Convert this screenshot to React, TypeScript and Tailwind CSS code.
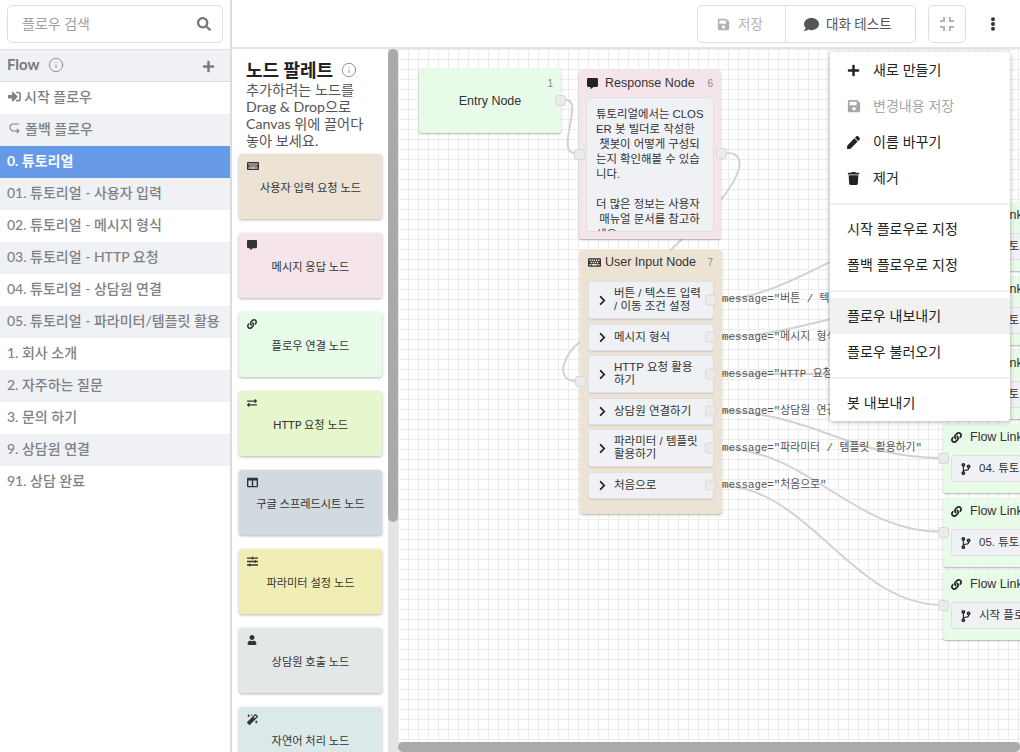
import React from 'react'
import {
  FaSearch, FaPlus, FaSave, FaComment, FaCommentAlt, FaEllipsisV, FaPen, FaTrash, FaLink, FaCodeBranch,
  FaChevronRight, FaKeyboard, FaSignInAlt, FaUser, FaMagic, FaSlidersH, FaExchangeAlt, FaColumns,
} from 'react-icons/fa'
import { MdFullscreenExit } from 'react-icons/md'
import { Info } from 'lucide-react'

const flows = [
  '01. 튜토리얼 - 사용자 입력',
  '02. 튜토리얼 - 메시지 형식',
  '03. 튜토리얼 - HTTP 요청',
  '04. 튜토리얼 - 상담원 연결',
  '05. 튜토리얼 - 파라미터/템플릿 활용',
  '1. 회사 소개',
  '2. 자주하는 질문',
  '3. 문의 하기',
  '9. 상담원 연결',
  '91. 상담 완료',
]

const palette = [
  { name: '사용자 입력 요청 노드', bg: 'bg-[#ece3d5]', icon: <FaKeyboard size={12} /> },
  { name: '메시지 응답 노드', bg: 'bg-[#f5e5ea]', icon: <FaCommentAlt size={10} /> },
  { name: '플로우 연결 노드', bg: 'bg-[#e8fae8]', icon: <FaLink size={10} /> },
  { name: 'HTTP 요청 노드', bg: 'bg-[#e6f7cd]', icon: <FaExchangeAlt size={10} /> },
  { name: '구글 스프레드시트 노드', bg: 'bg-[#d0dae0]', icon: <FaColumns size={11} /> },
  { name: '파라미터 설정 노드', bg: 'bg-[#f0eeb5]', icon: <FaSlidersH size={11} /> },
  { name: '상담원 호출 노드', bg: 'bg-[#e4e7e7]', icon: <FaUser size={10} /> },
  { name: '자연어 처리 노드', bg: 'bg-[#dbe9e9]', icon: <FaMagic size={11} /> },
]

const inputs = [
  { label: '버튼 / 텍스트 입력\n/ 이동 조건 설정', h: 'h-[38px]' },
  { label: '메시지 형식', h: 'h-[27px]' },
  { label: 'HTTP 요청 활용\n하기', h: 'h-[38px]' },
  { label: '상담원 연결하기', h: 'h-[27px]' },
  { label: '파라미터 / 템플릿\n활용하기', h: 'h-[38px]' },
  { label: '처음으로', h: 'h-[27px]' },
]

const messages = [
  { text: 'message="버튼 / 텍스트 입력 / 이동 조건 설정"', top: 'top-[244px]' },
  { text: 'message="메시지 형식"', top: 'top-[282px]' },
  { text: 'message="HTTP 요청 활용하기"', top: 'top-[319px]' },
  { text: 'message="상담원 연결하기"', top: 'top-[356px]' },
  { text: 'message="파라미터 / 템플릿 활용하기"', top: 'top-[393px]' },
  { text: 'message="처음으로"', top: 'top-[430px]' },
]

const links = [
  { label: '01. 튜토리얼', top: 'top-[153px]' },
  { label: '02. 튜토리얼', top: 'top-[227px]' },
  { label: '03. 튜토리얼', top: 'top-[301px]' },
  { label: '04. 튜토리얼', top: 'top-[375px]' },
  { label: '05. 튜토리얼', top: 'top-[449px]' },
  { label: '시작 플로우', top: 'top-[522px]' },
]

function Port({ className }: { className: string }) {
  return <div className={`absolute w-[11px] h-[11px] rounded-[3px] bg-[#ebebeb] border border-[#d8d8d8] ${className}`} />
}

function MenuItem({ icon, label, muted }: { icon: React.ReactNode; label: string; muted?: boolean }) {
  return (
    <div className={`flex items-center h-[36px] pl-[17px] text-[14px] ${muted ? 'text-[#a8a8a8]' : 'text-[#222]'}`}>
      <span className="w-[26px] flex">{icon}</span>
      {label}
    </div>
  )
}

function Divider() {
  return <div className="border-t-2 border-[#f0f0f0]" />
}

export default function App() {
  return (
    <div className="flex w-[1020px] h-[752px] overflow-hidden bg-white font-['Lato','Noto_Sans_CJK_KR',sans-serif]">
      {/* flow list */}
      <aside className="w-[232px] shrink-0 border-r-2 border-[#dcdcdc] flex flex-col">
        <div className="h-[49px] px-[7px] pt-[5px]">
          <div className="flex items-center justify-between h-[38px] border border-[#dedede] rounded-[5px] pl-[14px] pr-[11px] pb-[1px] text-[14px] text-[#a0a0a0]">
            플로우 검색
            <FaSearch size={14} className="text-[#777]" />
          </div>
        </div>
        <div className="flex items-center justify-between h-[33px] pb-[2px] px-[7px] bg-[#eff1f5] border-y border-[#dedede] text-[#777b80]">
          <span className="flex items-center gap-[8px] font-bold text-[15px]">
            Flow <Info size={16} strokeWidth={1.2} />
          </span>
          <FaPlus size={13} className="mr-[8px] mt-[3px]" />
        </div>
        <div className="text-[14px] font-medium text-[#7e8286] [&>div]:pb-[3px]">
          <div className="flex items-center gap-[3px] h-[32px] px-[8px]">
            <FaSignInAlt size={13} /> 시작 플로우
          </div>
          <div className="flex items-center gap-[4px] h-[32px] px-[8px] bg-[#eff1f5]">
            <svg width="13" height="13" viewBox="0 0 13 13" fill="none" stroke="currentColor" strokeWidth="1.1">
              <path d="M11 2H5.500a3.500 3.500 0 0 0 0 7H11M8.800 6.800 11 9l-2.200 2.200" />
            </svg>
            폴백 플로우
          </div>
          <div className="flex items-center h-[32px] px-[7px] bg-[#6699e8] text-white font-bold">0. 튜토리얼</div>
          {flows.map((f, i) => (
            <div key={f} className={`flex items-center h-[32px] px-[7px] ${i % 2 === 0 ? 'bg-[#eff1f5]' : 'bg-white'}`}>
              {f}
            </div>
          ))}
        </div>
      </aside>

      <div className="flex-1 flex flex-col min-w-0">
        {/* toolbar */}
        <header className="h-[49px] shrink-0 border-b-2 border-[#e4e4e4] flex items-start pt-[5px] pl-[465px]">
          <div className="flex h-[38px] w-[219px] border border-[#dedede] rounded-[5px] text-[13.5px]">
            <div className="w-[88px] border-r border-[#dedede] flex items-center gap-[8px] pl-[19px] text-[#b4b4b4]">
              <FaSave size={13} /> 저장
            </div>
            <div className="flex-1 flex items-center gap-[7px] pl-[18px] text-[#555]">
              <FaComment size={15} /> 대화 테스트
            </div>
          </div>
          <div className="ml-[12px] w-[38px] h-[38px] border border-[#dedede] rounded-[5px] flex items-center justify-center text-[#b4b4b4]">
            <MdFullscreenExit size={24} />
          </div>
          <div className="ml-[20px] h-[38px] flex items-center">
            <FaEllipsisV size={14} className="text-[#333]" />
          </div>
        </header>

        <div className="flex-1 flex min-h-0">
          {/* palette */}
          <section className="w-[156px] shrink-0 overflow-hidden pl-[7px] pr-[6px] pt-[10px]">
            <h2 className="pl-[7px] flex items-center gap-[8px] text-[18px] leading-[22px] font-bold text-[#222]">
              노드 팔레트 <Info size={16} strokeWidth={1.2} className="text-[#777]" />
            </h2>
            <p className="pl-[7px] text-[14.200px] leading-[17px] whitespace-nowrap text-[#555]">
              추가하려는 노드를
              <br />
              Drag &amp; Drop으로
              <br />
              Canvas 위에 끌어다
              <br />
              놓아 보세요.
            </p>
            <div className="mt-[5px] flex flex-col gap-[14px]">
              {palette.map((p) => (
                <div key={p.name} className={`h-[65px] shrink-0 rounded-[3px] shadow-[0_1px_3px_rgba(0,0,0,0.3)] px-[8px] pt-[4px] text-[#333] ${p.bg}`}>
                  <div className="h-[16px] flex items-center">{p.icon}</div>
                  <div className="text-center text-[11.200px] leading-[16px] mt-[6px]">{p.name}</div>
                </div>
              ))}
            </div>
          </section>

          <div className="w-[10px] shrink-0 bg-[#e4e4e4]">
            <div className="h-[473px] rounded-[5px] bg-[#aaaaaa]" />
          </div>

          {/* canvas */}
          <main className="relative flex-1 overflow-hidden bg-white bg-[linear-gradient(#ececec_1.5px,transparent_1.5px),linear-gradient(90deg,#ececec_1.5px,transparent_1.5px)] bg-[size:10px_10px] font-['Liberation_Sans','Noto_Sans_CJK_KR',sans-serif] text-[#333]">
            <svg className="absolute inset-0 w-full h-full" viewBox="398 49 622 703" fill="none" stroke="#d2d2d2" strokeWidth="2">
              <path d="M566 100 C584 100 555 153 575 153" />
              <path d="M727 153 C752 153 738 186 700 222 C670 250 640 280 600 320" />
              <path d="M581 341 C562 355 555 381 576 381" />
              <path d="M717 300 C790 300 860 228 943 226" />
              <path d="M717 337 C800 337 860 302 943 300" />
              <path d="M717 374 C800 374 860 374 943 374" />
              <path d="M717 411 C810 411 850 458 943 458" />
              <path d="M717 448 C810 448 850 532 943 532" />
              <path d="M717 485 C810 485 850 605 943 605" />
            </svg>

            {messages.map((m) => (
              <div key={m.text} className={`absolute left-[324px] whitespace-pre text-[10.800px] leading-[13px] text-[#555] font-['Liberation_Mono','Noto_Sans_CJK_KR',monospace] ${m.top}`}>
                {m.text}
              </div>
            ))}

            {/* entry */}
            <div className="absolute left-[21px] top-[19px] w-[142px] h-[65px] pt-[1px] bg-[#e8fae8] rounded-[3px] shadow-[0_1px_2px_rgba(0,0,0,0.3)] flex items-center justify-center text-[12.500px]">
              Entry Node
              <span className="absolute right-[8px] top-[8px] text-[10px] text-[#888]">1</span>
              <Port className="right-[-5px] top-[27px]" />
            </div>

            {/* response */}
            <div className="absolute left-[181px] top-[21px] w-[142px] h-[169px] bg-[#f5e5ea] rounded-[3px] shadow-[0_1px_2px_rgba(0,0,0,0.3)] px-[7px]">
              <div className="h-[27px] flex items-center text-[12.500px] pl-[1px]">
                <FaCommentAlt size={11} className="text-[#222] mr-[7px]" />
                Response Node
                <span className="ml-auto mr-[1px] text-[10px] text-[#888]">6</span>
              </div>
              <div className="h-[135px] overflow-hidden rounded-t-[6px] bg-[#eff1f5] border border-[#dfdfe4] pl-[9px] pt-[9px] text-[11.400px] leading-[15px] whitespace-pre">
                {'튜토리얼에서는 CLOS\nER 봇 빌더로 작성한\n 챗봇이 어떻게 구성되\n는지 확인해볼 수 있습\n니다.\n\n더 많은 정보는 사용자\n 매뉴얼 문서를 참고하\n세요.'}
              </div>
              <Port className="left-[-5px] top-[79px]" />
              <Port className="right-[-6px] top-[78px]" />
            </div>

            {/* user input */}
            <div className="absolute left-[182px] top-[201px] w-[142px] h-[264px] bg-[#ece3d5] rounded-[3px] shadow-[0_1px_2px_rgba(0,0,0,0.3)] px-[8px]">
              <div className="h-[25px] mb-[6px] flex items-center text-[12.500px]">
                <FaKeyboard size={13} className="mr-[4px]" />
                User Input Node
                <span className="ml-auto mr-[1px] text-[10px] text-[#888]">7</span>
              </div>
              <div className="flex flex-col gap-[4.500px]">
                {inputs.map((item) => (
                  <div key={item.label} className={`relative flex items-center rounded-[3px] bg-[#eff1f5] border border-[#dfdfe4] shadow-[0_1px_1px_rgba(0,0,0,0.1)] pl-[8px] pr-[8px] text-[11.500px] leading-[13px] ${item.h}`}>
                    <FaChevronRight size={11} className="shrink-0 mr-[6px] text-[#222]" />
                    <span className="whitespace-pre">{item.label}</span>
                    <Port className="right-[-3px] top-1/2 -translate-y-1/2" />
                  </div>
                ))}
              </div>
              <Port className="left-[-5px] top-[126px]" />
            </div>

            {/* flow links */}
            {links.map((l) => (
              <div key={l.top} className={`absolute left-[545px] w-[200px] h-[69px] bg-[#e8fae8] rounded-[3px] shadow-[0_1px_2px_rgba(0,0,0,0.3)] pl-[8px] ${l.top}`}>
                <div className="h-[27px] flex items-center gap-[8px] text-[12.500px]">
                  <FaLink size={11} className="text-[#222]" />
                  Flow Link
                </div>
                <div className="h-[27px] mt-[4px] pt-[1px] flex items-center gap-[7px] rounded-[3px] bg-[#eff1f5] border border-[#dfdfe4] pl-[8px] text-[11.500px]">
                  <FaCodeBranch size={12} className="text-[#222]" />
                  {l.label}
                </div>
                <Port className="left-[-5px] top-[29px]" />
              </div>
            ))}

            {/* horizontal scrollbar */}
            <div className="absolute left-0 right-0 bottom-0 h-[10px] bg-[#e4e4e4]">
              <div className="h-full rounded-[5px] bg-[#aaaaaa]" />
            </div>
          </main>
        </div>
      </div>

      {/* dropdown menu */}
      <div className="absolute left-[830px] top-[52px] w-[180px] h-[369px] bg-white rounded-[3px] shadow-[0_1px_5px_rgba(0,0,0,0.3)] font-['Liberation_Sans','Noto_Sans_CJK_KR',sans-serif]">
        <MenuItem icon={<FaPlus size={13} />} label="새로 만들기" />
        <MenuItem icon={<FaSave size={14} />} label="변경내용 저장" muted />
        <MenuItem icon={<FaPen size={13} />} label="이름 바꾸기" />
        <MenuItem icon={<FaTrash size={13} />} label="제거" />
        <div className="h-[7px]" />
        <Divider />
        <div className="h-[6px]" />
        <div className="flex items-center h-[36px] pl-[17px] text-[14px] text-[#222]">시작 플로우로 지정</div>
        <div className="flex items-center h-[36px] pl-[17px] text-[14px] text-[#222]">폴백 플로우로 지정</div>
        <div className="h-[7px]" />
        <Divider />
        <div className="h-[6px]" />
        <div className="flex items-center h-[36px] pl-[17px] text-[14px] text-[#222] bg-[#f1f1f1]">플로우 내보내기</div>
        <div className="flex items-center h-[36px] pl-[17px] text-[14px] text-[#222]">플로우 불러오기</div>
        <div className="h-[7px]" />
        <Divider />
        <div className="flex items-center h-[36px] mt-[6px] pl-[17px] text-[14px] text-[#222]">봇 내보내기</div>
      </div>
    </div>
  )
}
